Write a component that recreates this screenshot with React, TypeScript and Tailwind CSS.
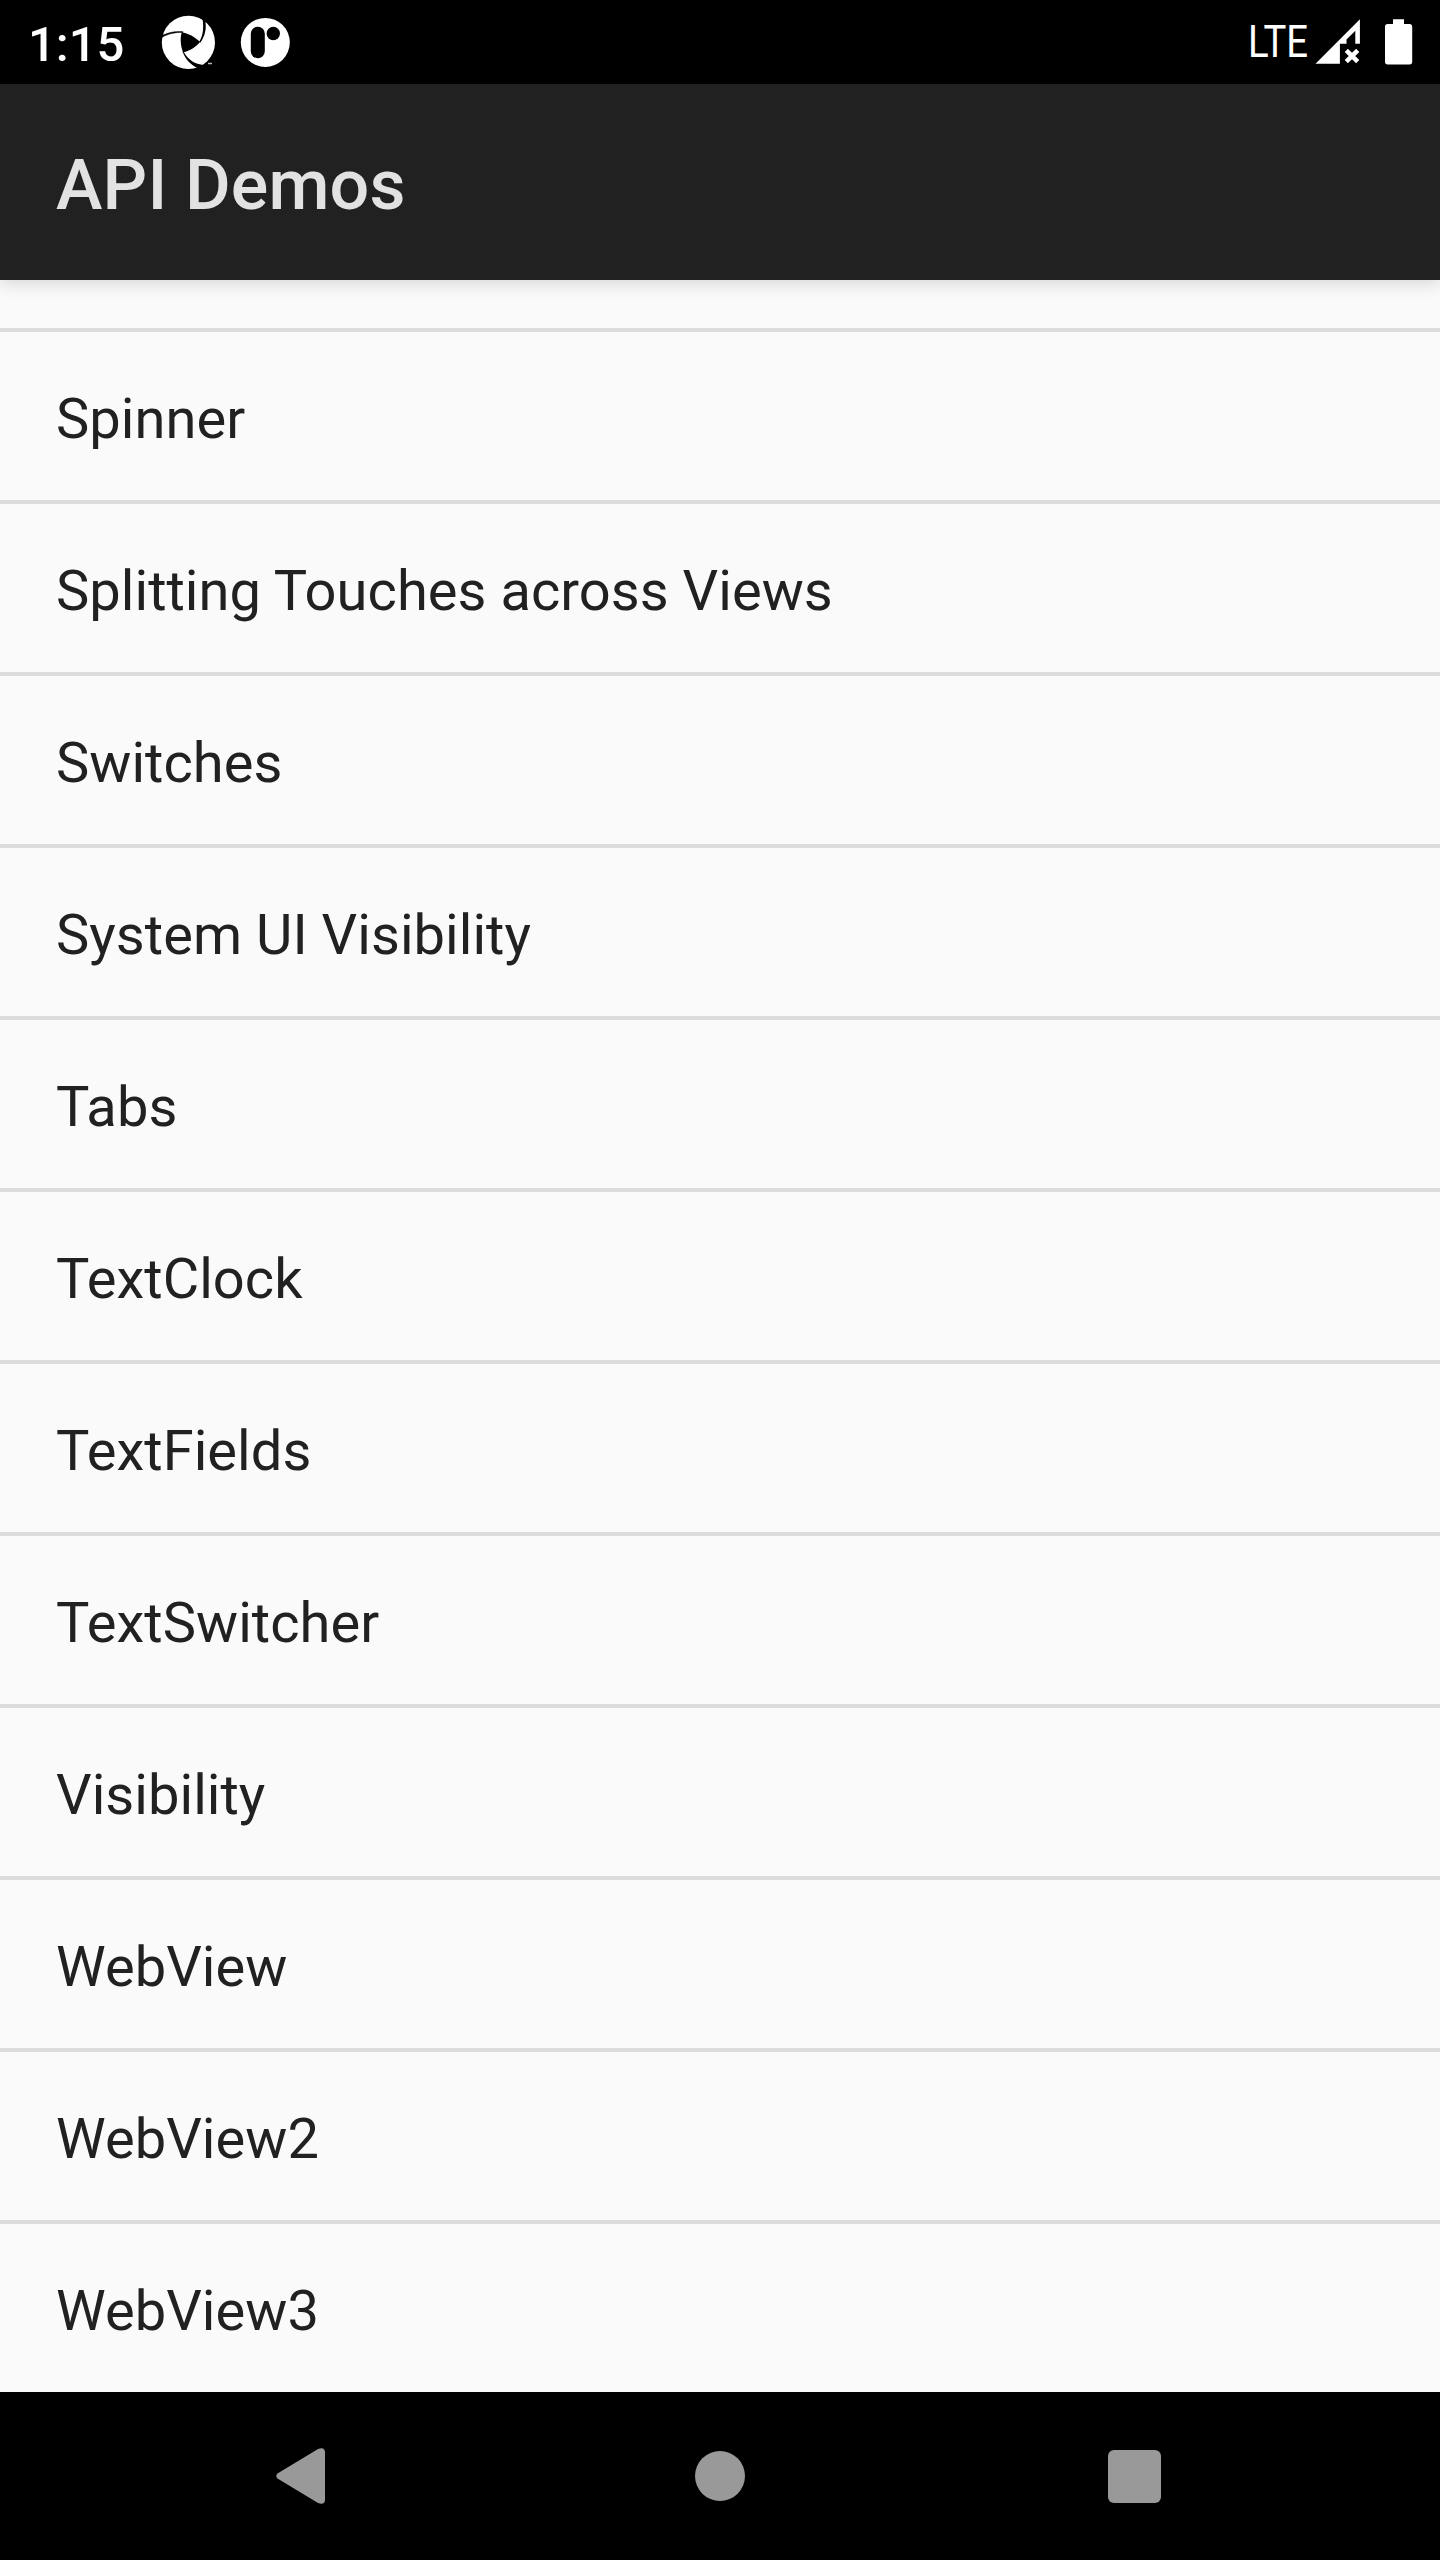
const items = [
  'Spinner',
  'Splitting Touches across Views',
  'Switches',
  'System UI Visibility',
  'Tabs',
  'TextClock',
  'TextFields',
  'TextSwitcher',
  'Visibility',
  'WebView',
  'WebView2',
  'WebView3',
];

function ShutterIcon() {
  return (
    <svg className="ml-[37px] h-[54px] w-[54px] shrink-0" viewBox="161 15 54 54">
      <circle cx="188.400" cy="42.400" r="26.600" fill="#fff" />
      <path d="M181.700 32.500 C188 33 195 37 200 42 C196 47 190 51 183 52.300 C180.500 46 180 38 181.700 32.500 Z" />
      <path d="M161 38 C166 34.500 174 32 183 32.500 L183 31.700 C174 31 167 33 161 36 Z" stroke="#000" strokeWidth="0.500" />
      <path d="M202.500 19 C204 28 203 36 199 42 L200.500 42.500 C205 36 207 28 205 20 Z" />
      <path d="M182.500 51.500 C185 58.500 190 64.500 198.500 68.500 L204 65 C195 64.500 188 59.500 183.800 52 Z" />
      <path d="M208 63.500h4" stroke="#bbb" strokeWidth="1.500" />
    </svg>
  );
}

function RIcon() {
  return (
    <svg className="ml-[25px] h-[50px] w-[50px] shrink-0" viewBox="240 17 50 50">
      <circle cx="265.300" cy="42.400" r="24.500" fill="#fff" />
      <rect x="250.800" y="26.700" width="14" height="31.500" rx="7" />
      <circle cx="273.300" cy="33.500" r="6.700" />
    </svg>
  );
}

function SignalIcon() {
  return (
    <svg className="ml-[6px] h-[54px] w-[48px] shrink-0" viewBox="1314 15 48 54" fill="#fff">
      <path d="M1315.500 63.700 L1359.900 19.300 V43.700 H1355.300 V30.700 L1346.500 39.500 V43.700 H1339.900 V63.700 Z" />
      <path d="M1346.300 50.300 L1357.700 61.700 M1357.700 50.300 L1346.300 61.700" stroke="#fff" strokeWidth="4.500" />
    </svg>
  );
}

function BatteryIcon() {
  return (
    <svg className="ml-[22px] h-[48px] w-[30px] shrink-0" viewBox="1384 18 30 48" fill="#fff">
      <path d="M1393 19.300h11v4.700h5.500a2.700 2.700 0 0 1 2.700 2.700v35a2.700 2.700 0 0 1-2.700 2.700h-21.800a2.700 2.700 0 0 1-2.700-2.700v-35a2.700 2.700 0 0 1 2.700-2.700h5.300z" />
    </svg>
  );
}

function StatusBar() {
  return (
    <div className="flex h-[84px] shrink-0 items-center bg-black text-white">
      <span className="w-[124px] shrink-0 pl-[28px] pt-[5px] text-[49px] leading-none font-medium whitespace-nowrap">1:15</span>
      <ShutterIcon />
      <RIcon />
      <div className="ml-auto flex items-center pr-[26px]">
        <span className="w-[60px] origin-left scale-x-[0.87] text-[44px] leading-none">LTE</span>
        <SignalIcon />
        <BatteryIcon />
      </div>
    </div>
  );
}

export default function App() {
  return (
    <div className="flex h-[2560px] w-[1440px] flex-col overflow-hidden bg-[#fafafa] font-['Roboto',sans-serif]">
      <StatusBar />
      <header className="z-10 flex h-[196px] shrink-0 items-center bg-[#212121] px-14 pt-[6px] shadow-[0_4px_16px_rgba(0,0,0,0.14)]">
        <h1 className="text-[70px] leading-none font-medium tracking-[0.15px] text-[#e2e2e2]">API Demos</h1>
      </header>
      <ul className="flex flex-1 flex-col pt-12">
        {items.map((item) => (
          <li
            key={item}
            className="flex h-[172px] shrink-0 items-center border-t-4 border-[#dcdcdc] px-14 pt-[6px] text-[56px] leading-none tracking-[0.05px] text-[#212121]"
          >
            {item}
          </li>
        ))}
      </ul>
      <nav className="flex h-[168px] shrink-0 items-center bg-black pl-[276px]">
        <svg className="h-[56px] w-[49px]" viewBox="0 0 49 56" fill="#999">
          <path d="M1.500 25.500 L42 1 Q48.500 -1.500 49 4 V52 Q48.500 57.500 42 55 L1.500 30.500 Q-1 28 1.500 25.500Z" />
        </svg>
        <div className="ml-[370px] h-[50px] w-[50px] rounded-full bg-[#999]" />
        <div className="ml-[363px] h-[53px] w-[53px] rounded-[6px] bg-[#999]" />
      </nav>
    </div>
  );
}
